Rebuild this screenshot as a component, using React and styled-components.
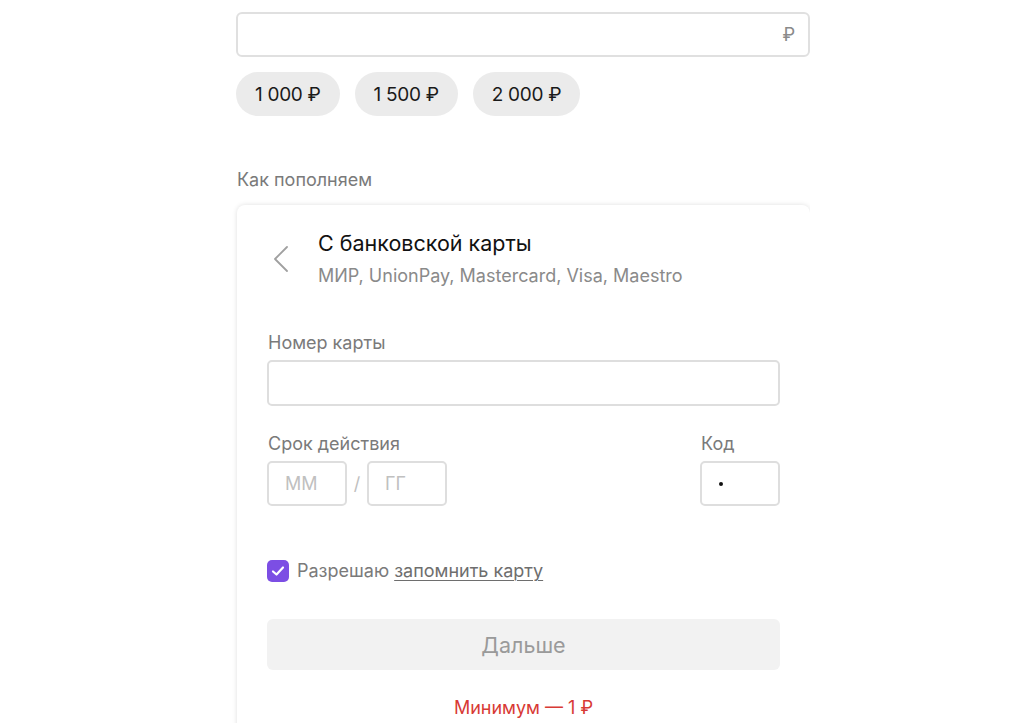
import React from "react";
import styled, { createGlobalStyle } from "styled-components";

const Global = createGlobalStyle`
  html, body { margin: 0; padding: 0; background: #fff; }
  body { font-family: Inter, "Noto Sans", sans-serif; color: #111; line-height: 22px; }
`;

const Page = styled.div`
  width: 574px;
  padding: 12px 0 0 236px;
  height: 711px;
  overflow: hidden;
`;

const AmountBox = styled.div`
  box-sizing: border-box;
  height: 45px;
  border: 2px solid #e0e0e0;
  border-radius: 6px;
  display: flex;
  align-items: center;
  justify-content: flex-end;
  padding: 0 13px;
  font-size: 18px;
  color: #8a8a8a;
`;

const Chips = styled.div`
  display: flex;
  gap: 15px;
  margin-top: 15px;
`;

const Chip = styled.button`
  height: 44px;
  padding: 0 19px;
  border: none;
  border-radius: 22px;
  background: #ebebeb;
  font-family: inherit;
  font-size: 19px;
  color: #1a1a1a;
  letter-spacing: -0.3px;
`;

const SectionLabel = styled.div`
  margin-top: 53px;
  margin-left: 1px;
  font-size: 18px;
  color: #7a7a7a;
`;

const Card = styled.div`
  margin-top: 14px;
  margin-left: 1px;
  border-radius: 8px;
  box-shadow: 0 0 5px rgba(0, 0, 0, 0.13);
  padding: 25px 30px 40px 30px;
`;

const Header = styled.div`
  display: flex;
  align-items: center;
  gap: 25px;
`;

const Back = styled.div`
  width: 24px;
  display: flex;
  justify-content: center;
  padding-left: 2px;
`;

const TitleCol = styled.div`
  display: flex;
  flex-direction: column;
  gap: 9px;
`;

const Title = styled.div`
  font-size: 21.5px;
  line-height: 26px;
  color: #111;
`;

const Sub = styled.div`
  font-size: 18px;
  line-height: 22px;
  color: #8a8a8a;
`;

const Label = styled.div`
  font-size: 18px;
  line-height: 22px;
  color: #7a7a7a;
  margin-bottom: 6px;
  margin-left: 1px;
`;

const Field = styled.div`
  margin-top: ${(p) => p.$mt || 0}px;
`;

const Input = styled.div`
  box-sizing: border-box;
  height: ${(p) => p.$h || 46}px;
  width: ${(p) => (p.$w ? p.$w + "px" : "100%")};
  border: 2px solid #dedede;
  border-radius: 5px;
  display: flex;
  align-items: center;
  padding-left: 16px;
  font-size: 18px;
  color: #c0c0c0;
`;

const Row = styled.div`
  display: flex;
  justify-content: space-between;
  margin-top: 27px;
`;

const DateRow = styled.div`
  display: flex;
  align-items: center;
  gap: 6px;
`;

const Slash = styled.span`
  font-size: 18px;
  color: #c0c0c0;
  width: 8px;
  text-align: center;
`;

const Dot = styled.span`
  width: 4px;
  height: 4px;
  border-radius: 50%;
  background: #111;
  margin-left: 1px;
`;

const CheckRow = styled.label`
  display: flex;
  align-items: center;
  gap: 8px;
  margin-top: 54px;
  font-size: 18px;
  color: #7a7a7a;
`;

const Box = styled.span`
  width: 22px;
  height: 22px;
  border-radius: 5px;
  background: #7c4ee4;
  display: flex;
  align-items: center;
  justify-content: center;
`;

const Link = styled.span`
  text-decoration: underline;
  text-underline-offset: 3px;
  text-decoration-thickness: 1px;
  color: #6e6e6e;
`;

const Next = styled.button`
  margin-top: 37px;
  width: 100%;
  height: 51px;
  border: none;
  border-radius: 6px;
  background: #f2f2f2;
  font-family: inherit;
  font-size: 21.5px;
  color: #9a9a9a;
`;

const Error = styled.div`
  margin-top: 27px;
  text-align: center;
  font-size: 18px;
  color: #d83a35;
`;

export default function App() {
  return (
    <>
      <Global />
      <Page>
        <AmountBox>₽</AmountBox>
        <Chips>
          <Chip>1 000 ₽</Chip>
          <Chip>1 500 ₽</Chip>
          <Chip>2 000 ₽</Chip>
        </Chips>
        <SectionLabel>Как пополняем</SectionLabel>
        <Card>
          <Header>
            <Back>
              <svg width="16" height="28" viewBox="0 0 16 28" fill="none">
                <path d="M14 2 L2 14 L14 26" stroke="#a0a0a0" strokeWidth="1.8" strokeLinecap="round" strokeLinejoin="round" />
              </svg>
            </Back>
            <TitleCol>
              <Title>С банковской карты</Title>
              <Sub>МИР, UnionPay, Mastercard, Visa, Maestro</Sub>
            </TitleCol>
          </Header>
          <Field $mt={45}>
            <Label>Номер карты</Label>
            <Input />
          </Field>
          <Row>
            <div>
              <Label>Срок действия</Label>
              <DateRow>
                <Input $w={80} $h={45}>ММ</Input>
                <Slash>/</Slash>
                <Input $w={80} $h={45}>ГГ</Input>
              </DateRow>
            </div>
            <div>
              <Label>Код</Label>
              <Input $w={80} $h={45}>
                <Dot />
              </Input>
            </div>
          </Row>
          <CheckRow>
            <Box>
              <svg width="14" height="12" viewBox="0 0 14 12" fill="none">
                <path d="M2 6.5 L5.5 9.5 L12 2.5" stroke="#fff" strokeWidth="2.2" strokeLinecap="round" strokeLinejoin="round" />
              </svg>
            </Box>
            <span>
              Разрешаю <Link>запомнить карту</Link>
            </span>
          </CheckRow>
          <Next>Дальше</Next>
          <Error>Минимум — 1 ₽</Error>
        </Card>
      </Page>
    </>
  );
}
